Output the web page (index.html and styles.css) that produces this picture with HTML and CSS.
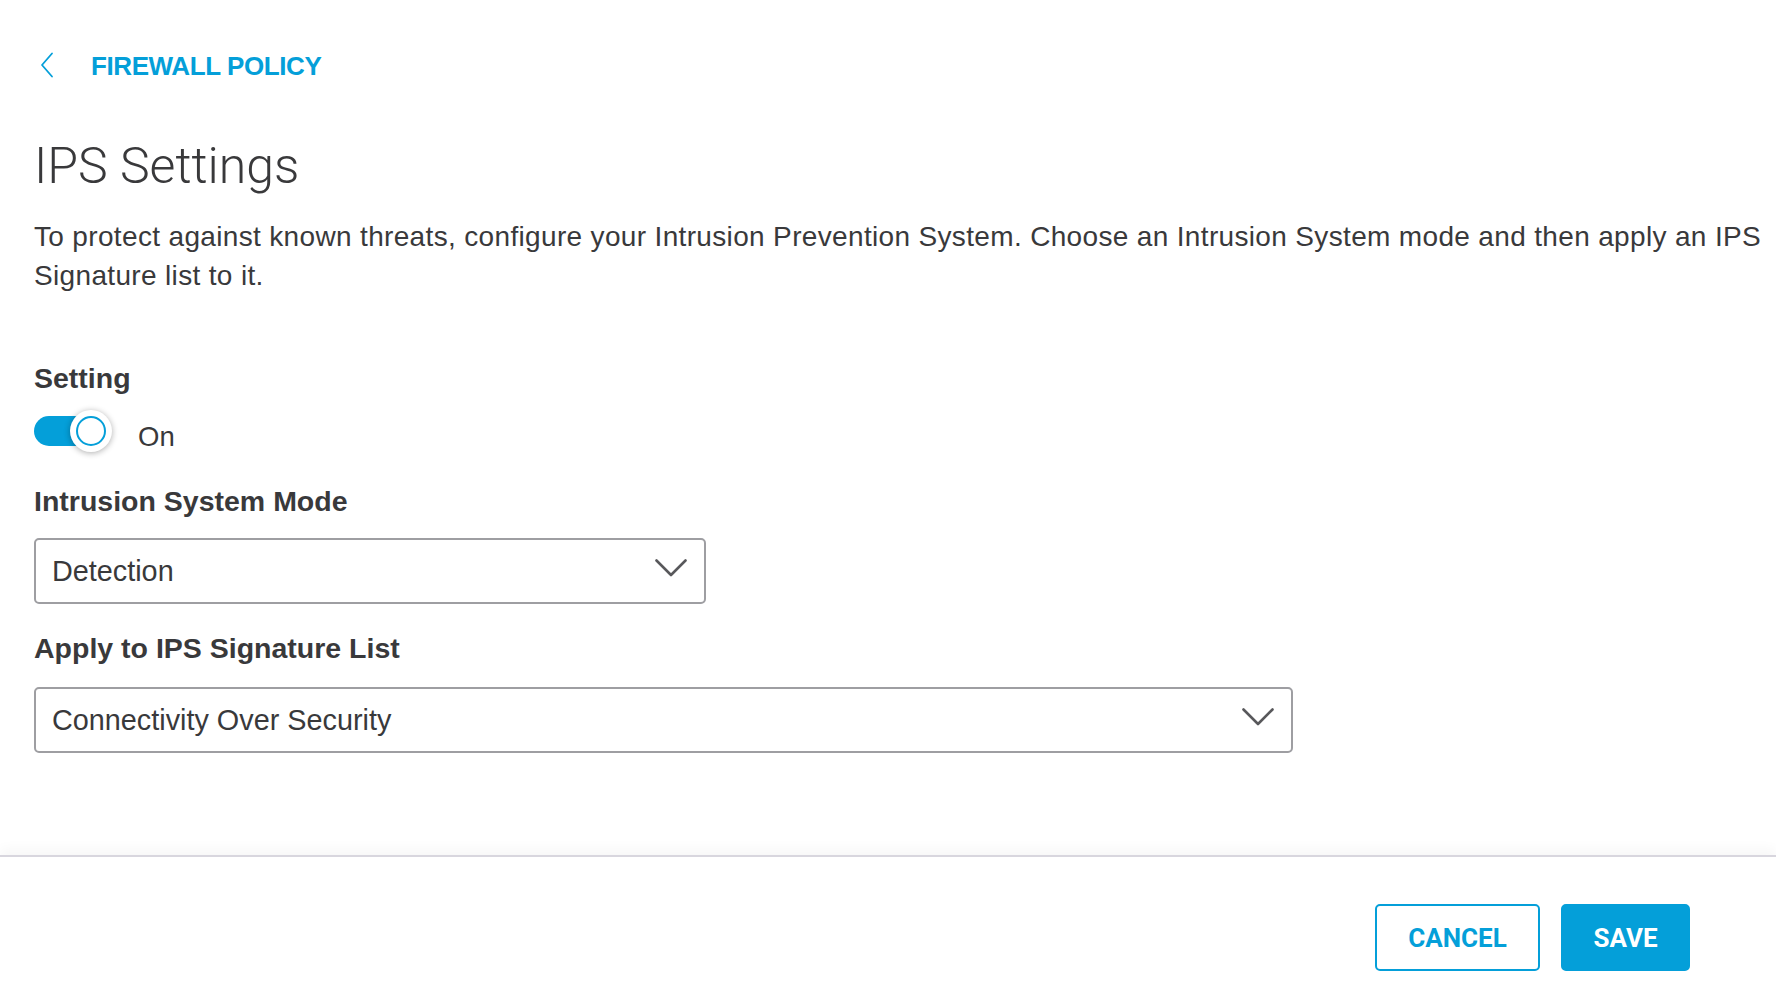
FILE: index.html
```html
<!DOCTYPE html>
<html lang="en">
<head>
<meta charset="utf-8">
<title>IPS Settings</title>
<link rel="stylesheet" href="styles.css">
</head>
<body>
<div class="page">
  <main class="content">
    <a class="back" href="#">
      <svg class="back-icon" width="14" height="26" viewBox="0 0 14 26" aria-hidden="true">
        <path d="M12 1.5 L2 13 L12 24.5" fill="none" stroke="#049fd9" stroke-width="1.8" stroke-linecap="round" stroke-linejoin="round"/>
      </svg>
      <span class="back-text">FIREWALL POLICY</span>
    </a>
    <h1 class="title">IPS Settings</h1>
    <p class="intro">To protect against known threats, configure your Intrusion Prevention System. Choose an Intrusion System mode and then apply an IPS Signature list to it.</p>

    <div class="label label-setting">Setting</div>
    <div class="toggle-row">
      <div class="toggle">
        <div class="track"></div>
        <div class="knob"><div class="ring"></div></div>
      </div>
      <span class="toggle-text">On</span>
    </div>

    <div class="label label-mode">Intrusion System Mode</div>
    <div class="select select-mode">
      <span class="select-value">Detection</span>
      <svg class="chev" width="32" height="18" viewBox="0 0 32 18" aria-hidden="true">
        <path d="M1.5 1.5 L16 16 L30.5 1.5" fill="none" stroke="#58585b" stroke-width="2.6" stroke-linecap="round" stroke-linejoin="round"/>
      </svg>
    </div>

    <div class="label label-list">Apply to IPS Signature List</div>
    <div class="select select-list">
      <span class="select-value">Connectivity Over Security</span>
      <svg class="chev" width="32" height="18" viewBox="0 0 32 18" aria-hidden="true">
        <path d="M1.5 1.5 L16 16 L30.5 1.5" fill="none" stroke="#58585b" stroke-width="2.6" stroke-linecap="round" stroke-linejoin="round"/>
      </svg>
    </div>
  </main>
  <footer class="footer">
    <button class="btn btn-cancel" type="button">CANCEL</button>
    <button class="btn btn-save" type="button">SAVE</button>
  </footer>
</div>
</body>
</html>
```

FILE: styles.css
```css
* { box-sizing: border-box; }

html, body {
  margin: 0;
  padding: 0;
  background: #ffffff;
}

body {
  font-family: "Liberation Sans", Arial, sans-serif;
  color: #39393b;
}

.page {
  height: 984px;
  display: flex;
  flex-direction: column;
}

.content {
  flex: 1;
  padding: 51px 4px 0 34px;
}

.back {
  display: flex;
  align-items: center;
  height: 30px;
  text-decoration: none;
  padding-left: 6px;
}

.back-icon {
  display: block;
  margin-top: -3px;
}

.back-text {
  margin-left: 37px;
  font-size: 26px;
  line-height: 30px;
  font-weight: 700;
  color: #049fd9;
  letter-spacing: -0.4px;
}

.title {
  margin: 55px 0 0 0;
  font-family: Roboto, "Liberation Sans", Arial, sans-serif;
  font-size: 50px;
  line-height: 60px;
  font-weight: 300;
  color: #39393b;
}

.intro {
  margin: 21px 0 0 0;
  font-size: 28px;
  line-height: 39px;
  font-weight: 400;
  letter-spacing: 0.34px;
  color: #39393b;
}

.label {
  font-size: 28.5px;
  line-height: 32px;
  font-weight: 700;
  color: #39393b;
}

.label-setting { margin-top: 67px; }
.label-mode { margin-top: 33px; }
.label-list { margin-top: 28px; }

.toggle-row {
  margin-top: 16px;
  display: flex;
  align-items: center;
  height: 42px;
}

.toggle {
  position: relative;
  width: 78px;
  height: 42px;
}

.track {
  position: absolute;
  left: 0;
  top: 6px;
  width: 68px;
  height: 30px;
  border-radius: 15px;
  background: #049fd9;
}

.knob {
  position: absolute;
  left: 36px;
  top: 0;
  width: 42px;
  height: 42px;
  border-radius: 50%;
  background: #ffffff;
  box-shadow: 0 1px 6px rgba(0, 0, 0, 0.32);
  display: flex;
  align-items: center;
  justify-content: center;
}

.ring {
  width: 30px;
  height: 30px;
  border-radius: 50%;
  border: 2px solid #049fd9;
}

.toggle-text {
  margin-left: 26px;
  margin-top: 11px;
  font-size: 27.5px;
  line-height: 32px;
}

.select {
  display: flex;
  align-items: center;
  justify-content: space-between;
  height: 66px;
  border: 2px solid #9e9ea2;
  border-radius: 5px;
  padding: 0 17px 0 16px;
  background: #ffffff;
}

.select-mode {
  margin-top: 21px;
  width: 672px;
}

.select-list {
  margin-top: 23px;
  width: 1259px;
}

.select-value {
  font-size: 28.8px;
  line-height: 32px;
  color: #39393b;
}

.chev {
  display: block;
  margin-top: -6px;
}

.footer {
  height: 129px;
  border-top: 2px solid #d8d6de;
  box-shadow: 0 -6px 12px rgba(0, 0, 0, 0.035);
  display: flex;
  justify-content: flex-end;
  align-items: flex-start;
  padding: 47px 86px 0 0;
  gap: 21px;
  background: #ffffff;
}

.btn {
  height: 67px;
  border-radius: 5px;
  border: 2px solid #049fd9;
  font-family: Roboto, "Liberation Sans", Arial, sans-serif;
  font-size: 26px;
  font-weight: 700;
  padding: 0;
  cursor: pointer;
}

.btn-cancel {
  width: 165px;
  background: #ffffff;
  color: #049fd9;
}

.btn-save {
  width: 129px;
  background: #049fd9;
  color: #ffffff;
}
```
